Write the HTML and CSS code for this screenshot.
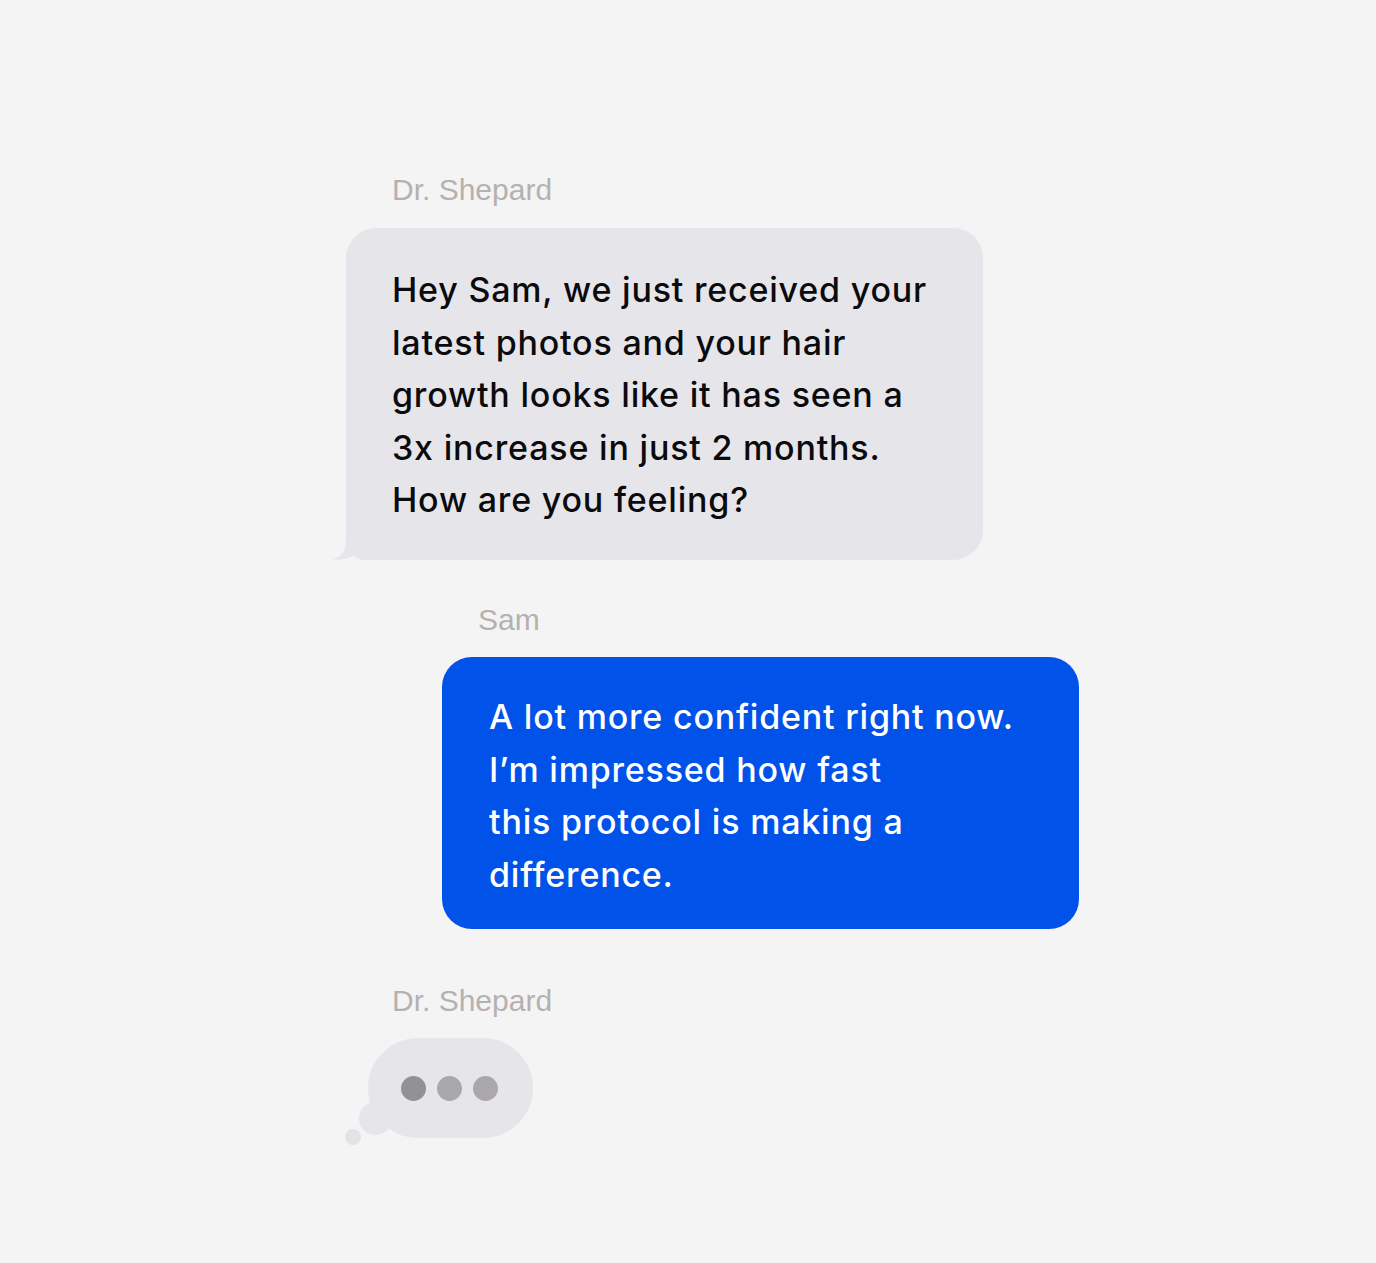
FILE: index.html
```html
<!DOCTYPE html>
<html lang="en">
<head>
<meta charset="utf-8">
<title>Chat</title>
<link rel="stylesheet" href="styles.css">
</head>
<body>
<main class="chat">
  <div class="label label-doc">Dr. Shepard</div>
  <div class="bubble bubble-in">
    <p class="msg">Hey Sam, we just received your<br>latest photos and your hair<br>growth looks like it has seen a<br>3x increase in just 2 months.<br>How are you feeling?</p>
    <svg class="tail" width="40" height="30" viewBox="0 0 40 30" aria-hidden="true"><path d="M13 0 L13 12 C13 21 8 27 0 30 C9 30 17 28 24 24 L24 0 Z" fill="#e6e5ea"/></svg>
  </div>
  <div class="label label-sam">Sam</div>
  <div class="bubble bubble-out">
    <p class="msg">A lot more confident right now.<br>I’m impressed how fast<br>this protocol is making a<br>difference.</p>
  </div>
  <div class="label label-doc label-last">Dr. Shepard</div>
  <div class="typing">
    <span class="puff puff-big"></span>
    <span class="puff puff-small"></span>
    <span class="dot dot-dark"></span>
    <span class="dot"></span>
    <span class="dot"></span>
  </div>
</main>
</body>
</html>
```

FILE: styles.css
```css
html, body {
  margin: 0;
  padding: 0;
  background: #f4f4f4;
}

.chat {
  display: flex;
  flex-direction: column;
  align-items: flex-start;
  padding: 173px 0 0 346px;
  min-height: 1090px;
}

.label {
  font-family: "Liberation Sans", Arial, sans-serif;
  font-size: 30px;
  line-height: 34px;
  color: #b5b1b1;
  margin-left: 46px;
}

.label-sam {
  margin-left: 132px;
  margin-top: 43px;
}

.label-last {
  margin-top: 55px;
}

.bubble {
  position: relative;
  box-sizing: border-box;
  width: 637px;
  border-radius: 30px;
  margin-top: 21px;
}

.bubble-in {
  background: #e6e5ea;
  color: #0b0b0d;
  height: 332px;
  padding: 36px 20px 0 46px;
  border-bottom-left-radius: 20px;
}

.bubble-out {
  background: #0052e9;
  color: #ffffff;
  height: 272px;
  margin-left: 96px;
  margin-top: 20px;
  padding: 34px 20px 0 47px;
}

.msg {
  margin: 0;
  font-family: Inter, "Noto Sans", sans-serif;
  font-size: 34px;
  font-weight: 500;
  line-height: 52.5px;
  letter-spacing: 0.8px;
  white-space: nowrap;
}

.tail {
  position: absolute;
  left: -13px;
  bottom: 0;
}

.typing {
  position: relative;
  display: flex;
  align-items: center;
  gap: 11px;
  box-sizing: border-box;
  width: 165px;
  height: 100px;
  margin: 20px 0 0 22px;
  padding-left: 33px;
  background: #e6e5ea;
  border-radius: 50px;
}

.dot {
  width: 25px;
  height: 25px;
  border-radius: 50%;
  background: #aaa8ab;
}

.dot-dark {
  background: #939194;
}

.puff {
  position: absolute;
  border-radius: 50%;
  background: #e6e5ea;
}

.puff-big {
  width: 33px;
  height: 33px;
  left: -9px;
  top: 64px;
}

.puff-small {
  width: 16px;
  height: 16px;
  left: -23px;
  top: 91px;
  background: #e3e2e7;
}
```
